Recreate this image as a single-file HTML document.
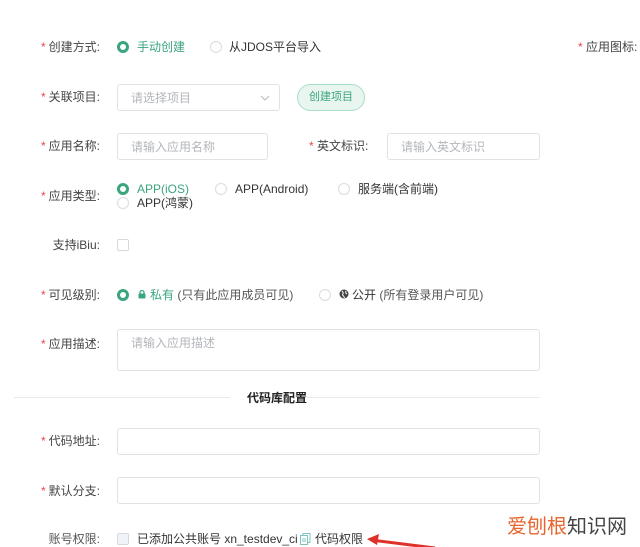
<!DOCTYPE html>
<html><head><meta charset="utf-8"><style>
*{margin:0;padding:0;box-sizing:border-box}
body{width:640px;height:547px;background:#fff;position:relative;overflow:hidden;font-family:"Liberation Sans","Noto Sans CJK SC",sans-serif;font-size:12px;color:#444}
.a{position:absolute;white-space:nowrap;line-height:14px}
.s{color:#e5484d}
.lab{position:absolute;white-space:nowrap;line-height:14px;right:540px;text-align:right;color:#444}
.lab .s{margin-right:3px}
.r{position:absolute;width:12px;height:12px;border:1px solid #d9dce1;border-radius:50%;background:#fff}
.r.on{border:3px solid #3ba57e}
.r.on::after{content:"";position:absolute;left:1px;top:1px;width:4px;height:4px;border-radius:50%;background:#fff}
.g{color:#3ba57e}
.in{position:absolute;border:1px solid #dfe2e6;border-radius:3px;background:#fff}
.ph{color:#b3b6bb;position:absolute;left:13px;top:6px;white-space:nowrap;line-height:14px}
.cb{position:absolute;width:12px;height:12px;border:1px solid #d5d9df;border-radius:2px;background:#fff}
</style></head><body>
<div class="lab" style="top:40px"><span class="s">*</span>创建方式:</div>
<div class="r on" style="left:117px;top:41px"></div>
<div class="a g" style="left:137px;top:40px">手动创建</div>
<div class="r" style="left:210px;top:41px"></div>
<div class="a" style="left:229px;top:40px;color:#333">从JDOS平台导入</div>
<div class="a" style="left:578px;top:40px"><span class="s">*</span> 应用图标:</div>

<div class="lab" style="top:90px"><span class="s">*</span>关联项目:</div>
<div class="in" style="left:117px;top:84px;width:163px;height:27px"><span class="ph">请选择项目</span>
<svg style="position:absolute;right:9px;top:10px" width="10" height="6"><path d="M1 1 L5 5 L9 1" stroke="#bbb" fill="none"/></svg></div>
<div class="a" style="left:297px;top:84px;width:68px;height:27px;border:1px solid #a9dcc6;background:#e9f6f0;border-radius:14px;color:#3ba57e;text-align:center;line-height:25px;font-size:11px">创建项目</div>

<div class="lab" style="top:139px"><span class="s">*</span>应用名称:</div>
<div class="in" style="left:117px;top:133px;width:151px;height:27px"><span class="ph">请输入应用名称</span></div>
<div class="a" style="left:309px;top:139px"><span class="s">*</span> 英文标识:</div>
<div class="in" style="left:387px;top:133px;width:153px;height:27px"><span class="ph">请输入英文标识</span></div>

<div class="lab" style="top:189px"><span class="s">*</span>应用类型:</div>
<div class="r on" style="left:117px;top:183px"></div>
<div class="a g" style="left:137px;top:182px">APP(iOS)</div>
<div class="r" style="left:215px;top:183px"></div>
<div class="a" style="left:235px;top:182px;color:#333">APP(Android)</div>
<div class="r" style="left:338px;top:183px"></div>
<div class="a" style="left:358px;top:182px;color:#333">服务端(含前端)</div>
<div class="r" style="left:117px;top:197px"></div>
<div class="a" style="left:137px;top:196px;color:#333">APP(鸿蒙)</div>

<div class="lab" style="top:238px">支持iBiu:</div>
<div class="cb" style="left:117px;top:239px"></div>

<div class="lab" style="top:288px"><span class="s">*</span>可见级别:</div>
<div class="r on" style="left:117px;top:289px"></div>
<svg class="a" style="left:138px;top:289px" width="8" height="10"><path d="M2 5 V3.5 A2 2 0 0 1 6 3.5 V5" stroke="#3ba57e" fill="none" stroke-width="1.3"/><rect x="0.5" y="4.5" width="7" height="5" rx="1" fill="#3ba57e"/></svg>
<div class="a" style="left:150px;top:288px"><span class="g">私有</span> <span style="color:#555">(只有此应用成员可见)</span></div>
<div class="r" style="left:319px;top:289px"></div>
<svg class="a" style="left:339px;top:289px" width="10" height="10"><circle cx="5" cy="5" r="4.5" fill="#444"/><path d="M3 2 Q5 4 3.5 6 Q5 7 5.5 9 M7 2 Q6 4 8 5" stroke="#fff" fill="none" stroke-width="1"/></svg>
<div class="a" style="left:352px;top:288px;color:#333">公开 <span style="color:#555">(所有登录用户可见)</span></div>

<div class="lab" style="top:337px"><span class="s">*</span>应用描述:</div>
<div class="in" style="left:117px;top:329px;width:423px;height:42px"><span class="ph" style="top:6px">请输入应用描述</span></div>

<div class="a" style="left:14px;top:397px;width:216px;height:1px;background:#e8eaed"></div>
<div class="a" style="left:265px;top:397px;width:275px;height:1px;background:#e8eaed"></div>
<div class="a" style="left:247px;top:391px;color:#222;font-weight:bold">代码库配置</div>

<div class="lab" style="top:434px"><span class="s">*</span>代码地址:</div>
<div class="in" style="left:117px;top:428px;width:423px;height:27px"></div>
<div class="lab" style="top:484px"><span class="s">*</span>默认分支:</div>
<div class="in" style="left:117px;top:477px;width:423px;height:27px"></div>

<div class="lab" style="top:532px;color:#555">账号权限:</div>
<div class="cb" style="left:117px;top:533px;background:#f0f3f8"></div>
<div class="a" style="left:137px;top:532px;color:#333">已添加公共账号 xn_testdev_ci</div>
<svg class="a" style="left:300px;top:533px" width="11" height="12"><rect x="3" y="0.5" width="7" height="9" fill="none" stroke="#7cc4c0"/><rect x="0.5" y="2.5" width="7" height="9" fill="#fff" stroke="#7cc4c0"/><path d="M2 6 H6 M2 8 H6" stroke="#7cc4c0"/></svg>
<div class="a" style="left:315px;top:532px;color:#333">代码权限</div>
<div class="a" style="left:507px;top:515px;font-size:20px;line-height:24px;color:#444"><span style="color:#e8662e">爱刨根</span>知识网</div>
<svg class="a" style="left:365px;top:532px" width="80" height="15"><path d="M6 8 L70 16" stroke="#e0302a" stroke-width="3"/><path d="M2 7 L14 2 L12 13 Z" fill="#e0302a"/></svg>
</body></html>
